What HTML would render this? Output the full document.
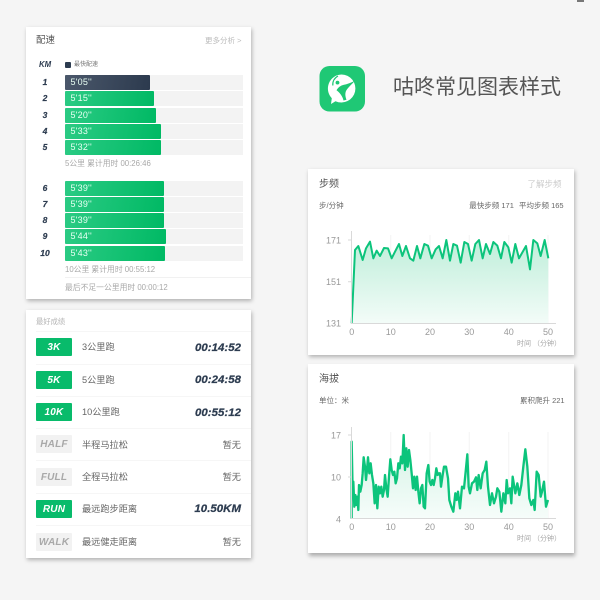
<!DOCTYPE html>
<html>
<head>
<meta charset="utf-8">
<style>
*{box-sizing:border-box;margin:0;padding:0}
html,body{width:600px;height:600px;overflow:hidden;background:#f5f5f5}
body{position:relative;font-family:"Liberation Sans","Noto Sans CJK SC",sans-serif;color:#666}
.card{position:absolute;background:#fff;box-shadow:1px 2px 4px rgba(0,0,0,.28)}
.t{position:absolute;white-space:nowrap;line-height:1}
.km{position:absolute;left:25px;width:40px;text-align:center;font:italic bold 8.5px/15px "Liberation Sans",sans-serif;color:#2d3c50;-webkit-text-stroke:.2px #2d3c50}
.track{position:absolute;left:64.5px;width:178px;height:15px;background:#f3f3f3}
.bar{position:absolute;left:64.5px;height:15px;background:linear-gradient(100deg,#2bcb84,#00b964);color:#e8fff3;font:9px/15px "Liberation Sans",sans-serif;padding-left:6px;letter-spacing:.2px;border-radius:1px}
.bar.d{background:linear-gradient(100deg,#4b586b,#2c3a4e)}
.sub{position:absolute;left:65px;font-size:7.8px;color:#a8a8a8;line-height:1;white-space:nowrap}
.badge{position:absolute;left:36px;width:36px;height:18px;background:#08bb6b;color:#fff;text-align:center;font:italic bold 10px/20px "Liberation Sans",sans-serif;letter-spacing:.2px;border-radius:1px}
.badge.g{background:#f2f2f2;color:#a9a9a9}
.name{position:absolute;left:82px;font-size:9.2px;color:#666;line-height:1;white-space:nowrap}
.val{position:absolute;right:359px;font:italic bold 11.4px/1 "Liberation Sans",sans-serif;color:#2d3c50;white-space:nowrap;letter-spacing:.05px;-webkit-text-stroke:.25px #2d3c50}
.nil{position:absolute;right:359px;font-size:9.2px;line-height:1;color:#666;white-space:nowrap}
.sep{position:absolute;left:36px;width:215px;height:1px;background:#f6f6f6}
</style>
</head>
<body>
<div style="position:absolute;left:577px;top:0;width:7px;height:2px;background:#777"></div>

<div class="card" style="left:26px;top:27px;width:225px;height:272px"></div>
<div class="t" style="left:36px;top:36px;font-size:9.5px;color:#555">配速</div>
<div class="t" style="left:205px;top:37px;font-size:7.5px;color:#bbb">更多分析 &gt;</div>
<div class="t" style="left:39px;top:60.500px;font:italic bold 7.8px/1 'Liberation Sans',sans-serif;color:#2d3c50">KM</div>
<div style="position:absolute;left:65px;top:61.500px;width:5.5px;height:6px;background:#2d3c50;border-radius:1px"></div>
<div class="t" style="left:74px;top:61.500px;font-size:6px;color:#777">最快配速</div>

<div class="km" style="top:75px">1</div><div class="track" style="top:75px"></div><div class="bar d" style="top:75px;width:85.5px">5'05''</div>
<div class="km" style="top:91.3px">2</div><div class="track" style="top:91.3px"></div><div class="bar" style="top:91.3px;width:89.5px">5'15''</div>
<div class="km" style="top:107.6px">3</div><div class="track" style="top:107.6px"></div><div class="bar" style="top:107.6px;width:91.5px">5'20''</div>
<div class="km" style="top:123.8px">4</div><div class="track" style="top:123.8px"></div><div class="bar" style="top:123.8px;width:96.5px">5'33''</div>
<div class="km" style="top:140px">5</div><div class="track" style="top:140px"></div><div class="bar" style="top:140px;width:96px">5'32''</div>
<div class="sub" style="top:160px">5公里 累计用时 00:26:46</div>

<div class="km" style="top:180.7px">6</div><div class="track" style="top:180.7px"></div><div class="bar" style="top:180.7px;width:99px">5'39''</div>
<div class="km" style="top:197px">7</div><div class="track" style="top:197px"></div><div class="bar" style="top:197px;width:99px">5'39''</div>
<div class="km" style="top:213px">8</div><div class="track" style="top:213px"></div><div class="bar" style="top:213px;width:99px">5'39''</div>
<div class="km" style="top:229.3px">9</div><div class="track" style="top:229.3px"></div><div class="bar" style="top:229.3px;width:101px">5'44''</div>
<div class="km" style="top:245.6px">10</div><div class="track" style="top:245.6px"></div><div class="bar" style="top:245.6px;width:100.5px">5'43''</div>
<div class="sub" style="top:266px">10公里 累计用时 00:55:12</div>
<div style="position:absolute;left:65px;top:277px;width:186px;height:1px;background:#f1f1f1"></div>
<div class="sub" style="top:283.500px">最后不足一公里用时 00:00:12</div>

<div class="card" style="left:26px;top:310px;width:225px;height:248px"></div>
<div class="t" style="left:36px;top:318px;font-size:7.3px;color:#b5b5b5">最好成绩</div>
<div class="sep" style="top:331px"></div>
<div class="badge" style="top:338.3px">3K</div><div class="name" style="top:343px">3公里跑</div><div class="val" style="top:342.500px">00:14:52</div>
<div class="sep" style="top:363.5px"></div>
<div class="badge" style="top:370.7px">5K</div><div class="name" style="top:375.5px">5公里跑</div><div class="val" style="top:375px">00:24:58</div>
<div class="sep" style="top:395.8px"></div>
<div class="badge" style="top:403px">10K</div><div class="name" style="top:407.5px">10公里跑</div><div class="val" style="top:407.500px">00:55:12</div>
<div class="sep" style="top:428px"></div>
<div class="badge g" style="top:435.3px">HALF</div><div class="name" style="top:440.500px">半程马拉松</div><div class="nil" style="top:440.500px">暂无</div>
<div class="sep" style="top:460px"></div>
<div class="badge g" style="top:467.7px">FULL</div><div class="name" style="top:473px">全程马拉松</div><div class="nil" style="top:473px">暂无</div>
<div class="sep" style="top:492.5px"></div>
<div class="badge" style="top:500px">RUN</div><div class="name" style="top:505px">最远跑步距离</div><div class="val" style="top:504px">10.50KM</div>
<div class="sep" style="top:525px"></div>
<div class="badge g" style="top:532.6px">WALK</div><div class="name" style="top:537.500px">最远健走距离</div><div class="nil" style="top:537.500px">暂无</div>

<svg style="position:absolute;left:319px;top:66px" width="46" height="46" viewBox="319 66 46 46">
<rect x="319.5" y="66" width="45.5" height="45.5" rx="10" fill="#1fc875"/>
<path d="M341.500 74.500a14 14 0 1 1-6 26.700l-4.500 2.800 .8-5.800A14 14 0 0 1 341.500 74.500z" fill="#fff"/>
<circle cx="337.500" cy="82.600" r="1.900" fill="#1fc875"/>
<path d="M332.800 85.500C332.500 81.500 334.500 78 338 76" fill="none" stroke="#1fc875" stroke-width="1.200"/>
<path d="M355.800 80C351.500 82.800 347.500 84 344 84.800C340.500 85.600 338 87.500 336.500 90.300C339.500 92.500 342.500 96 343.500 100.500L346.500 99.800C345.300 96.500 345 94 345.800 91.500C347 88.500 351 85 355.800 80Z" fill="#1fc875"/>
</svg>
<div class="t" style="left:393px;top:77px;font-size:21px;color:#555">咕咚常见图表样式</div>

<div class="card" style="left:308px;top:169px;width:265.500px;height:186px"></div>
<div class="t" style="left:319px;top:180px;font-size:10px;color:#555">步频</div>
<div class="t" style="left:527.500px;top:180px;font-size:8.500px;color:#ccc">了解步频</div>
<div class="t" style="left:319px;top:202px;font-size:7.500px;color:#666">步/分钟</div>
<div class="t" style="left:469.300px;top:202px;font-size:7.500px;color:#666">最快步频 171</div>
<div class="t" style="left:519px;top:202px;font-size:7.500px;color:#666">平均步频 165</div>

<div class="card" style="left:308px;top:364px;width:266px;height:188.500px;box-shadow:1px 3px 4px rgba(0,0,0,.3)"></div>
<div class="t" style="left:319px;top:375px;font-size:10px;color:#555">海拔</div>
<div class="t" style="left:319px;top:397px;font-size:7.500px;color:#666">单位：米</div>
<div class="t" style="left:520px;top:397px;font-size:7.500px;color:#666">累积爬升 221</div>

<svg style="position:absolute;left:0;top:0" width="600" height="600" viewBox="0 0 600 600">
<defs>
<linearGradient id="g1" x1="0" y1="0" x2="0" y2="1"><stop offset="0" stop-color="#bfeeda"/><stop offset="1" stop-color="#f3fcf8"/></linearGradient>
<linearGradient id="g2" x1="0" y1="0" x2="0" y2="1"><stop offset="0" stop-color="#cdf1e1"/><stop offset=".5" stop-color="#e4f7ef"/><stop offset="1" stop-color="#f6fdfa"/></linearGradient>
</defs>
<g stroke="#f3f3f3" stroke-width="1">
<path d="M390.700 235V323M430 235V323M469.300 235V323M508.700 235V323M548 235V323"/>
<path d="M390.700 432V518M430 432V518M469.300 432V518M508.700 432V518M548 432V518"/>
</g>
<g transform="translate(340 230) scale(.33333)">
<polygon fill="url(#g1)" points="35,280 45,60 55,48 68,90 78,55 90,35 100,85 110,62 120,78 132,54 144,55 155,85 165,65 177,42 187,78 198,48 210,85 220,92 231,48 241,85 253,42 264,47 275,85 287,58 297,48 308,85 319,30 330,92 340,42 351,47 362,98 373,36 384,42 395,92 406,42 417,30 428,85 438,42 450,72 460,36 472,47 483,85 493,36 505,52 515,98 526,42 537,85 558,48 570,118 580,30 592,40 602,78 614,30 625,85 625,280"/>
<polyline fill="none" stroke="#0cc47c" stroke-width="6" stroke-linejoin="round" points="35,280 45,60 55,48 68,90 78,55 90,35 100,85 110,62 120,78 132,54 144,55 155,85 165,65 177,42 187,78 198,48 210,85 220,92 231,48 241,85 253,42 264,47 275,85 287,58 297,48 308,85 319,30 330,92 340,42 351,47 362,98 373,36 384,42 395,92 406,42 417,30 428,85 438,42 450,72 460,36 472,47 483,85 493,36 505,52 515,98 526,42 537,85 558,48 570,118 580,30 592,40 602,78 614,30 625,85"/>
</g>
<g transform="translate(300 360) scale(.33333)">
<polygon fill="url(#g2)" points="155,476 155,245 158,400 160,365 163,440 166,405 169,435 172,410 175,450 177,375 181,395 185,375 188,340 191,292 195,320 198,360 201,330 204,292 208,340 212,310 216,345 220,370 224,430 228,375 232,445 236,380 240,400 244,380 248,410 252,390 255,345 259,385 263,410 267,350 271,298 275,330 279,345 283,335 287,370 291,355 295,310 299,325 303,290 307,310 311,225 315,330 319,265 323,320 327,270 331,300 335,340 339,385 343,350 347,390 351,350 355,395 359,430 363,385 367,375 371,440 375,445 380,340 385,315 389,365 393,375 397,360 401,375 405,355 409,325 413,345 417,340 420,340 423,380 428,345 432,320 438,320 444,355 448,420 454,440 460,455 466,400 470,420 474,395 480,445 486,380 492,385 496,345 502,283 506,380 510,400 516,370 522,365 528,352 532,390 536,345 542,385 548,340 554,330 559,305 564,380 570,435 576,400 582,430 588,410 592,385 598,395 604,455 610,400 616,430 620,360 624,400 630,385 634,430 638,350 646,400 652,370 658,405 664,375 670,320 676,268 682,320 688,415 694,435 700,420 704,450 710,335 716,345 722,410 726,395 732,365 738,440 744,420 744,476"/>
<polyline fill="none" stroke="#0cc47c" stroke-width="7" stroke-linejoin="round" points="155,476 155,245 158,400 160,365 163,440 166,405 169,435 172,410 175,450 177,375 181,395 185,375 188,340 191,292 195,320 198,360 201,330 204,292 208,340 212,310 216,345 220,370 224,430 228,375 232,445 236,380 240,400 244,380 248,410 252,390 255,345 259,385 263,410 267,350 271,298 275,330 279,345 283,335 287,370 291,355 295,310 299,325 303,290 307,310 311,225 315,330 319,265 323,320 327,270 331,300 335,340 339,385 343,350 347,390 351,350 355,395 359,430 363,385 367,375 371,440 375,445 380,340 385,315 389,365 393,375 397,360 401,375 405,355 409,325 413,345 417,340 420,340 423,380 428,345 432,320 438,320 444,355 448,420 454,440 460,455 466,400 470,420 474,395 480,445 486,380 492,385 496,345 502,283 506,380 510,400 516,370 522,365 528,352 532,390 536,345 542,385 548,340 554,330 559,305 564,380 570,435 576,400 582,430 588,410 592,385 598,395 604,455 610,400 616,430 620,360 624,400 630,385 634,430 638,350 646,400 652,370 658,405 664,375 670,320 676,268 682,320 688,415 694,435 700,420 704,450 710,335 716,345 722,410 726,395 732,365 738,440 744,420"/>
</g>
<g stroke="#d9d9d9" stroke-width="1" fill="none">
<path d="M351.500 231V323.500H556M348 240H351.500M348 281.700H351.500"/>
<path d="M351.500 427V518.500H556M348 435H351.500M348 477H351.500"/>
</g>
<g font-family="Liberation Sans,sans-serif" font-size="9" fill="#999">
<text x="341" y="243.500" text-anchor="end">171</text>
<text x="341" y="285" text-anchor="end">151</text>
<text x="341" y="326.500" text-anchor="end">131</text>
<g text-anchor="middle">
<text x="351.700" y="335">0</text><text x="390.700" y="335">10</text><text x="430" y="335">20</text><text x="469.300" y="335">30</text><text x="508.700" y="335">40</text><text x="548" y="335">50</text>
<text x="351.700" y="530">0</text><text x="390.700" y="530">10</text><text x="430" y="530">20</text><text x="469.300" y="530">30</text><text x="508.700" y="530">40</text><text x="548" y="530">50</text>
</g>
<text x="341" y="438.500" text-anchor="end">17</text>
<text x="341" y="480.500" text-anchor="end">10</text>
<text x="341" y="522.500" text-anchor="end">4</text>
</g>
<g font-family="Liberation Sans,Noto Sans CJK SC,sans-serif" font-size="7" fill="#a5a5a5">
<text x="517" y="345.500">时间 （分钟）</text>
<text x="517" y="540.500">时间 （分钟）</text>
</g>
</svg>
</body>
</html>
